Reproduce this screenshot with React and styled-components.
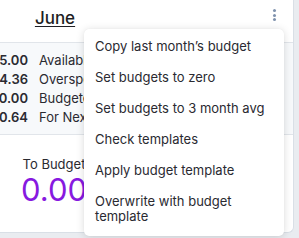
import React from "react";
import styled, { createGlobalStyle } from "styled-components";

const GlobalStyle = createGlobalStyle`
  body {
    margin: 0;
    background: #e9ecf0;
    font-family: Inter, "Noto Sans", sans-serif;
    overflow: hidden;
  }
`;

const Page = styled.div`
  position: relative;
  width: 299px;
  height: 238px;
`;

const Card = styled.div`
  width: 293px;
  height: 232px;
  background: #ffffff;
  border-right: 1px solid #d9dfe6;
  border-bottom: 1px solid #d9dfe6;
  border-bottom-right-radius: 6px;
  overflow: hidden;
  display: flex;
  flex-direction: column;
`;

const Header = styled.div`
  height: 42px;
  display: flex;
  align-items: center;
  border-bottom: 1px solid #e1e5ea;
`;

const MonthCol = styled.div`
  width: 110px;
  display: flex;
  justify-content: center;
  padding-bottom: 6px;
`;

const Month = styled.span`
  font-size: 17px;
  font-weight: 500;
  color: #1f1f24;
  text-decoration: underline;
  text-underline-offset: 2px;
`;

const Kebab = styled.div`
  margin-left: auto;
  margin-right: 17px;
  margin-bottom: 12px;
  display: flex;
  flex-direction: column;
  gap: 1.6px;
`;

const Dot = styled.span`
  width: 3px;
  height: 3px;
  border-radius: 50%;
  background: #7f92ad;
`;

const Summary = styled.div`
  height: 92px;
  background: #f7f9fb;
  border-bottom: 1px solid #e1e5ea;
  padding-top: 7px;
  box-sizing: border-box;
`;

const Row = styled.div`
  height: 19px;
  display: flex;
  align-items: center;
  font-size: 13px;
  color: #2a2a31;
  white-space: nowrap;
`;

const Amount = styled.span`
  width: 28px;
  flex-shrink: 0;
  display: flex;
  justify-content: flex-end;
  font-weight: 600;
`;

const Label = styled.span`
  margin-left: 11px;
`;

const ToBudget = styled.div`
  width: 108px;
  display: flex;
  flex-direction: column;
  align-items: center;
  padding-top: 21px;
`;

const ToBudgetLabel = styled.span`
  font-size: 13px;
  color: #2a2a31;
`;

const ToBudgetValue = styled.span`
  font-size: 31px;
  font-weight: 400;
  color: #8719e0;
  line-height: 34px;
  margin-top: 1px;
`;

const Menu = styled.div`
  position: absolute;
  left: 84px;
  top: 29px;
  width: 200px;
  background: #ffffff;
  border-radius: 5px;
  box-shadow: 0 1px 8px rgba(0, 0, 0, 0.14), 0 0 1px rgba(0, 0, 0, 0.08);
  padding: 2px 0 4px;
`;

const Item = styled.div`
  padding: 8px 11px;
  font-size: 13px;
  line-height: 15px;
  color: #2a2a31;
`;

const rows = [
  ["5.00", "Available funds"],
  ["4.36", "Overspent in May"],
  ["0.00", "Budgeted"],
  ["0.64", "For Next Month"],
];

const items = [
  "Copy last month’s budget",
  "Set budgets to zero",
  "Set budgets to 3 month avg",
  "Check templates",
  "Apply budget template",
  "Overwrite with budget template",
];

const App = () => {
  return (
    <Page>
      <GlobalStyle />
      <Card>
        <Header>
          <MonthCol>
            <Month>June</Month>
          </MonthCol>
          <Kebab>
            <Dot />
            <Dot />
            <Dot />
          </Kebab>
        </Header>
        <Summary>
          {rows.map(([amount, label]) => (
            <Row key={label}>
              <Amount>{amount}</Amount>
              <Label>{label}</Label>
            </Row>
          ))}
        </Summary>
        <ToBudget>
          <ToBudgetLabel>To Budget</ToBudgetLabel>
          <ToBudgetValue>0.00</ToBudgetValue>
        </ToBudget>
      </Card>
      <Menu>
        {items.map((item) => (
          <Item key={item}>{item}</Item>
        ))}
      </Menu>
    </Page>
  );
};

export default App;
